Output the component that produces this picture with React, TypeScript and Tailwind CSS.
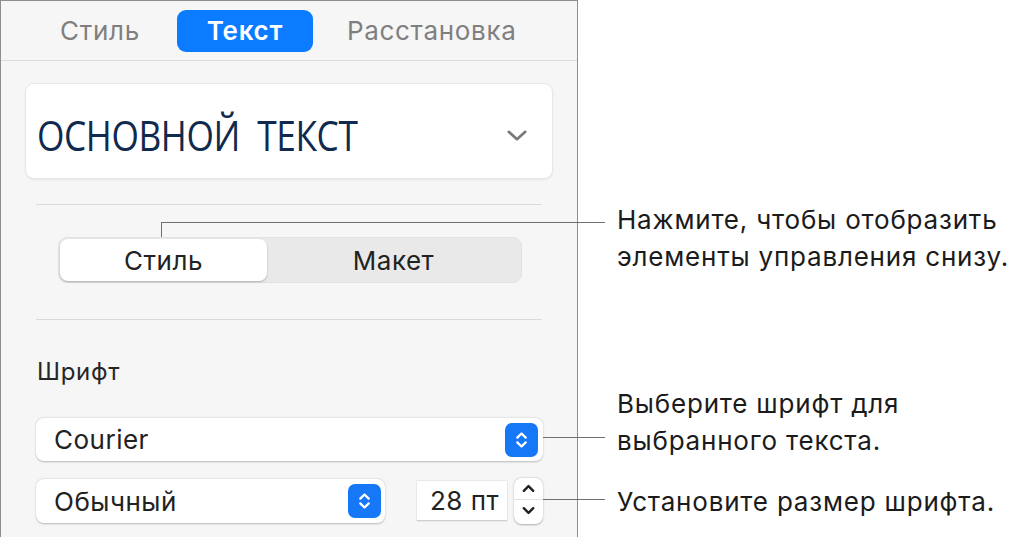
const sf = { fontFamily: 'Inter, "Noto Sans", sans-serif' };

function UpDown({ className = '' }: { className?: string }) {
  return (
    <svg viewBox="0 0 16 24" className={className} fill="none" stroke="currentColor" strokeWidth="2.4" strokeLinecap="round" strokeLinejoin="round">
      <path d="M3.5 9.5 L8 5 L12.5 9.5" />
      <path d="M3.5 14.5 L8 19 L12.5 14.5" />
    </svg>
  );
}

function BlueStepper() {
  return (
    <div className="w-[33px] h-[34px] rounded-[7px] bg-[#1677f7] text-white flex items-center justify-center">
      <UpDown className="w-[15px] h-[24px]" />
    </div>
  );
}

function Callout({ lines, className = '' }: { lines: string[]; className?: string }) {
  return (
    <div className={`text-[26px] leading-[37px] text-[#1b1b1b] tracking-[0.8px] ${className}`} style={sf}>
      {lines.map(l => (
        <div key={l}>{l}</div>
      ))}
    </div>
  );
}

export default function App() {
  return (
    <div className="relative w-[1024px] h-[537px] bg-white overflow-hidden flex" style={sf}>
      {/* inspector panel */}
      <div className="w-[578px] h-full shrink-0 bg-[#f6f6f6] border-l border-t border-r border-[#8e8e8e] flex flex-col">
        <div className="h-[60px] shrink-0 border-b border-[#dcdcdc] flex items-center pl-[59px] text-[26px] tracking-[0.7px]">
          <span className="text-[#7f7f7f]">Стиль</span>
          <span className="ml-[37px] w-[136px] h-[42px] rounded-[9px] bg-[#0b7bff] text-white font-semibold flex items-center justify-center">
            Текст
          </span>
          <span className="ml-[34px] text-[#7f7f7f]">Расстановка</span>
        </div>

        <div className="mx-[24px] mt-[22px] h-[96px] rounded-[9px] bg-white border border-[#e8e8e8] shadow-[0_1px_2px_rgba(0,0,0,0.08)] flex items-center pl-[11px] pr-[24px]">
          <span
            className="text-[#0f2a4e] text-[42px] tracking-[-0.5px] mt-[6px] origin-left scale-x-[0.84] whitespace-nowrap"
            style={{ fontFamily: '"Open Sans", "Noto Sans", sans-serif' }}
          >
            ОСНОВНОЙ&nbsp;&nbsp;ТЕКСТ
          </span>
          <svg viewBox="0 0 24 16" className="ml-auto w-[22px] h-[15px] mt-[8px]" fill="none" stroke="#7a7a7a" strokeWidth="3" strokeLinecap="round" strokeLinejoin="round">
            <path d="M3 4 L12 12 L21 4" />
          </svg>
        </div>

        <div className="mx-[35px] mt-[25px] h-px bg-[#dadada]" />

        <div className="ml-[57px] mr-[55px] mt-[32px] h-[46px] rounded-[9px] bg-[#e9e9e9] border border-[#e2e2e2] flex p-[1px] text-[26px] tracking-[0.5px] text-[#222]">
          <div className="w-[207px] rounded-[8px] bg-white shadow-[0_1px_2px_rgba(0,0,0,0.25)] flex items-center justify-center">Стиль</div>
          <div className="flex-1 flex items-center justify-center">Макет</div>
        </div>

        <div className="mx-[35px] mt-[36px] h-px bg-[#dadada]" />

        <div className="ml-[36px] mt-[34px] text-[24px] tracking-[0.7px] text-[#262626]">Шрифт</div>

        <div className="ml-[35px] mr-[34px] mt-[28px] h-[43px] rounded-[8px] bg-white shadow-[0_0.5px_2px_rgba(0,0,0,0.25)] flex items-center pl-[18px] pr-[5px] text-[26px] tracking-[0.5px] text-[#222]">
          <span>Courier</span>
          <div className="ml-auto">
            <BlueStepper />
          </div>
        </div>

        <div className="mt-[17px] ml-[35px] mr-[34px] flex items-center text-[26px] tracking-[0.5px] text-[#222]">
          <div className="w-[350px] h-[44px] rounded-[8px] bg-white shadow-[0_0.5px_2px_rgba(0,0,0,0.25)] flex items-center pl-[18px] pr-[4px]">
            <span>Обычный</span>
            <div className="ml-auto">
              <BlueStepper />
            </div>
          </div>
          <div className="ml-[32px] w-[90px] h-[40px] bg-white border-b border-[#cfcfcf] shadow-[0_0_1px_rgba(0,0,0,0.3)] flex items-center justify-end pr-[8px]">
            28 пт
          </div>
          <div className="ml-[7px] w-[29px] h-[46px] rounded-[8px] bg-white shadow-[0_0.5px_2px_rgba(0,0,0,0.3)] flex flex-col items-center">
            <svg viewBox="0 0 16 10" className="w-[15px] h-[10px] mt-[5px]" fill="none" stroke="currentColor" strokeWidth="2.6" strokeLinecap="round" strokeLinejoin="round">
              <path d="M3 8 L8 3 L13 8" />
            </svg>
            <div className="w-full h-px bg-[#e2e2e2] mt-[6px]" />
            <svg viewBox="0 0 16 10" className="w-[15px] h-[10px] mt-[6px]" fill="none" stroke="currentColor" strokeWidth="2.6" strokeLinecap="round" strokeLinejoin="round">
              <path d="M3 2 L8 7 L13 2" />
            </svg>
          </div>
        </div>
      </div>

      {/* callout texts */}
      <div className="flex-1 pl-[39px] flex flex-col">
        <Callout className="mt-[201px]" lines={['Нажмите, чтобы отобразить', 'элементы управления снизу.']} />
        <Callout className="mt-[110px]" lines={['Выберите шрифт для', 'выбранного текста.']} />
        <Callout className="mt-[24px]" lines={['Установите размер шрифта.']} />
      </div>

      {/* leader lines */}
      <div className="absolute left-[161px] top-[222px] w-px h-[15px] bg-[#6f6f6f]" />
      <div className="absolute left-[161px] top-[222px] w-[444px] h-px bg-[#6f6f6f]" />
      <div className="absolute left-[543px] top-[437px] w-[62px] h-px bg-[#6f6f6f]" />
      <div className="absolute left-[543px] top-[499px] w-[62px] h-px bg-[#6f6f6f]" />
    </div>
  );
}
